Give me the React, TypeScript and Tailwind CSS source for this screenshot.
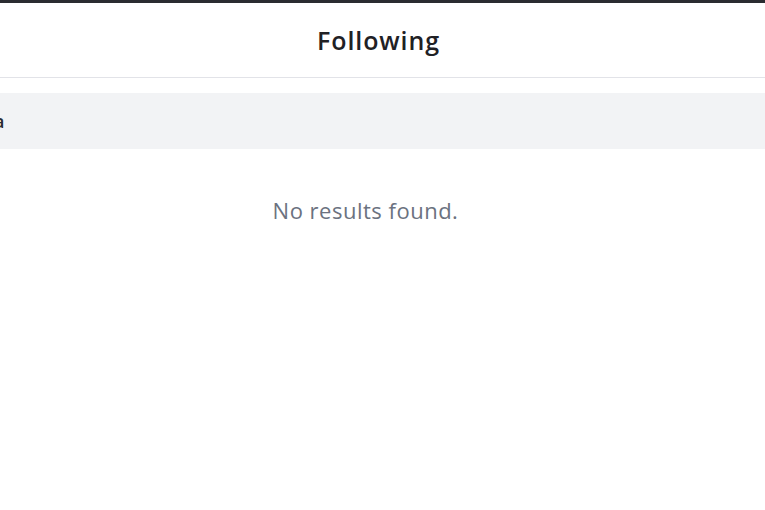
export default function App() {
  return (
    <div className="w-[765px] h-[510px] overflow-hidden bg-white" style={{ fontFamily: '"Open Sans", "Noto Sans", sans-serif' }}>
      <div className="h-[3px] bg-[#2a2c31]" />
      <div className="h-[75px] flex items-center justify-center border-b border-[#e2e3e8]">
        <span className="text-[25px] font-semibold tracking-[0.9px] text-[#1f2125] -translate-x-[4px] translate-y-[1px]">Following</span>
      </div>
      <div className="pt-[15px]">
        <div className="h-[56px] bg-[#f2f3f5] flex items-center overflow-hidden">
          <span className="text-[18px] font-semibold text-[#2b2d31] -ml-[6px]">a</span>
        </div>
      </div>
      <div className="pt-[45px] flex justify-center">
        <span className="text-[22px] tracking-[0.5px] text-[#6b7280] -translate-x-[17px]">No results found.</span>
      </div>
    </div>
  );
}
